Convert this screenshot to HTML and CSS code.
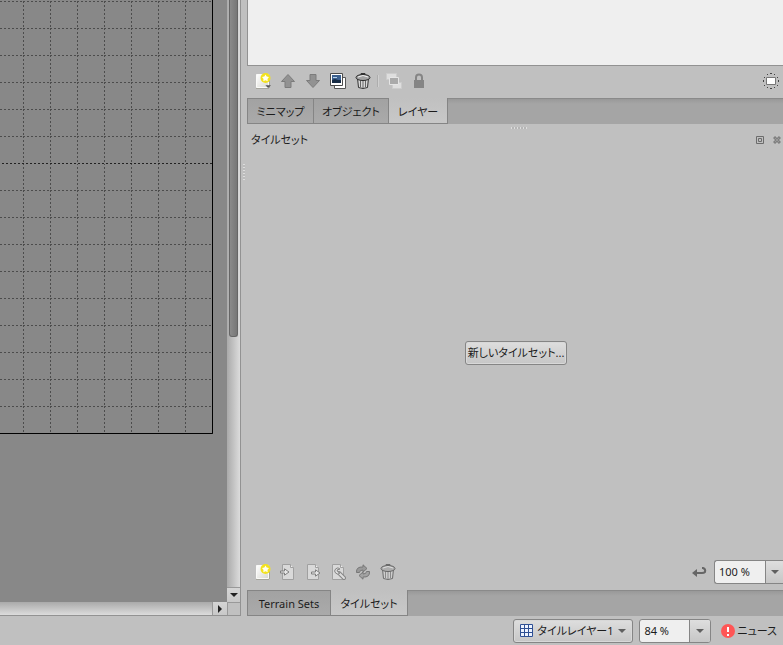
FILE: index.html
```html
<!DOCTYPE html>
<html lang="ja">
<head>
<meta charset="utf-8">
<title>Tiled</title>
<link rel="stylesheet" href="styles.css">
</head>
<body>
<svg class="defs" aria-hidden="true">
  <defs>
    <linearGradient id="paper" x1="0" y1="0" x2="1" y2="1"><stop offset="0" stop-color="#fff"/><stop offset="1" stop-color="#d8d8d2"/></linearGradient>
    <symbol id="new" viewBox="0 0 16 16">
      <path d="M1.5 1.5h12v13h-12z" fill="url(#paper)" stroke="#fafaf8"/>
      <path d="M1 15.5h13M14.5 7v8" stroke="#a5a59d" fill="none"/>
      <circle cx="10.500" cy="5" r="5" fill="#f3e21c"/>
      <path d="M10.500 1.500l1.200 2 2.300.600-1.500 1.800.2 2.300-2.200-.9-2.200.9.2-2.300L7 4.100l2.300-.6z" fill="#fffff0"/>
    </symbol>
    <symbol id="up" viewBox="0 0 16 16"><path d="M8 1.500l6.500 7H11v6H5v-6H1.500z" fill="#929292" stroke="#7c7c7c"/></symbol>
    <symbol id="copy" viewBox="0 0 16 16">
      <path d="M4.500 4.500h11v11h-11z" fill="#fff" stroke="#555"/>
      <path d="M.5.500h12v12H.5z" fill="#fff" stroke="#4c4c4c"/><path d="M2 2h9v8H2z" fill="#3b608f"/>
      <path d="M2 7l3-1 3 1h3v3H2z" fill="#162b45"/><path d="M3 4h4v1H3z" fill="#b8d3eb"/>
    </symbol>
    <symbol id="trash" viewBox="0 0 16 16">
      <path d="M2.500 5h11l-1 9.500q-4.500 2-9 0z" fill="#d8d8d8" stroke="#333"/>
      <path d="M5.500 7v7M8 7v8M10.500 7v7" stroke="#666" fill="none"/>
      <ellipse cx="8" cy="4.500" rx="7" ry="3" fill="#a2a2a2" stroke="#292929"/>
      <path d="M3 4q5-3 10 0" stroke="#f0f0f0" fill="none"/><path d="M6 2V.5h4V2" stroke="#333" fill="none"/>
    </symbol>
    <symbol id="layers" viewBox="0 0 16 16">
      <path d="M.5.500h10v6H.5zM6.500 9.500h9v6h-9z" fill="#dedede" stroke="#ccc"/><path d="M3.500 4.500h9v7h-9z" fill="#aaa" stroke="#e5e5e5"/>
    </symbol>
    <symbol id="lock" viewBox="0 0 16 16"><path d="M5 7V4.500a3 3 0 0 1 6 0V7" fill="none" stroke="#858585" stroke-width="2"/><path d="M3 7h10v8H3z" fill="#858585"/></symbol>
    <symbol id="page" viewBox="0 0 16 16"><path d="M2.500.5h8l3 3v12h-11z" fill="#d9d9d9" stroke="#a0a0a0"/><path d="M10.500.5v3h3" fill="#eee" stroke="#a0a0a0"/></symbol>
    <symbol id="arrow" viewBox="0 0 10 8"><path d="M.5 3h4V.8L9 4 4.500 7.200V5h-4z" fill="#e8e8e8" stroke="#808080"/></symbol>
  </defs>
</svg>
<main class="workspace">
  <section class="map-view" aria-label="マップ">
    <div class="canvas">
      <svg class="grid" width="213" height="434">
        <defs>
          <pattern id="cells" x="23" y="1" width="27" height="27" patternUnits="userSpaceOnUse">
            <path d="M0 .5h27M.5 0v27" stroke="#4c4c4c" stroke-dasharray="2 2" fill="none"/>
          </pattern>
        </defs>
        <rect width="213" height="434" fill="url(#cells)"/>
        <path d="M0 163.500h212" stroke="#888"/>
        <path d="M2 163.500h210" stroke="#222" stroke-dasharray="2 2"/>
        <path d="M212.500 0v433.500H0" stroke="#000" fill="none"/>
      </svg>
    </div>
    <div class="vscroll"><div class="thumb"></div><button class="step" aria-label="下へ"><i class="caret dark"></i></button></div>
    <div class="hscroll"><button class="step" aria-label="右へ"><i class="caret right"></i></button></div>
    <div class="corner"></div>
  </section>
  <div class="splitter"><i></i></div>
  <aside class="docks">
    <div class="layer-list"></div>
    <div class="toolbar">
      <button aria-label="新規レイヤー"><svg viewBox="0 0 17 17"><use href="#new"/><path d="M11 13h6l-3 3z" fill="#555"/></svg></button>
      <button aria-label="上へ"><svg><use href="#up"/></svg></button>
      <button aria-label="下へ"><svg class="flip"><use href="#up"/></svg></button>
      <button aria-label="複製"><svg><use href="#copy"/></svg></button>
      <button aria-label="削除"><svg><use href="#trash"/></svg></button>
      <span class="separator"></span>
      <button aria-label="他を隠す"><svg><use href="#layers"/></svg></button>
      <button aria-label="ロック"><svg><use href="#lock"/></svg></button>
      <span class="spacer"></span>
      <button aria-label="強調表示"><svg viewBox="0 0 16 16"><path d="M3.500 4.500h9v7h-9z" fill="#fff" stroke="#777"/><path d="M7 .5h2M4 1.500h1M11 1.500h1M1 4.500h1M14 4.500h1M0 7.500h1M0 8.500h1M15 7.500h1M15 8.500h1M1 12.500h1M14 12.500h1M4 14.500h1M11 14.500h1M7 15.500h2" stroke="#444"/></svg></button>
    </div>
    <nav class="tabs"><button class="mini">ミニマップ</button><button class="objects">オブジェクト</button><button class="layer active">レイヤー</button></nav>
    <div class="handle"></div>
    <header class="dock-title"><h2>タイルセット</h2>
      <button aria-label="フロート"><svg viewBox="0 0 8 8"><path d="M.5.500h7v7h-7zM2.500 2.500h3v3h-3z" fill="none" stroke="#6c6c6c"/></svg></button>
      <button aria-label="閉じる"><svg viewBox="0 0 8 8"><path d="M1 1l6 6M7 1L1 7" stroke="#808080" stroke-width="3"/><path d="M2 2l4 4M6 2L2 6" stroke="#999"/></svg></button>
    </header>
    <div class="tileset"><button class="push">新しいタイルセット...</button></div>
    <div class="toolbar lower">
      <button aria-label="新しいタイルセット"><svg><use href="#new"/></svg></button>
      <button aria-label="埋め込み"><svg><use href="#page"/><use href="#arrow" x="0" y="4" width="10" height="8"/></svg></button>
      <button aria-label="エクスポート"><svg><use href="#page"/><use href="#arrow" x="6" y="5" width="10" height="8"/></svg></button>
      <button aria-label="編集"><svg><use href="#page"/><path d="M9 9l5 5" stroke="#858585" stroke-width="4" stroke-linecap="round"/><path d="M9 9l5 5" stroke="#ddd" stroke-width="2" stroke-linecap="round"/><path d="M10 5a3 3 0 1 0 0 4L8 8l-1-2z" fill="#ddd" stroke="#858585"/></svg></button>
      <button aria-label="置換"><svg><path d="M1.500 8.500Q1 2.500 8 3V.8L12 4.500 8 8V6Q4.500 6 4.500 8.500z" fill="#999" stroke="#777"/><path d="M14.500 7.500q.5 6-6.500 5.500v2.200L4 11.500 8 8v2q3.500 0 3.500-2.500z" fill="#a2a2a2" stroke="#777"/></svg></button>
      <button aria-label="削除" class="faded"><svg><use href="#trash"/></svg></button>
      <span class="spacer"></span>
      <button aria-label="折り返し"><svg viewBox="0 0 16 16"><path d="M11 4h1q3 1 2 4-1 1-3 1H4" stroke="#666" stroke-width="2" fill="none"/><path d="M1 9l5-4v8z" fill="#666"/></svg></button>
      <div class="combo clipped"><input value="100 %" aria-label="タイルセットの倍率"><button aria-label="倍率を選ぶ"><i class="caret"></i></button></div>
    </div>
    <nav class="tabs"><button class="terrain">Terrain Sets</button><button class="sets active">タイルセット</button></nav>
  </aside>
</main>
<footer class="status">
  <button class="push current"><svg width="13" height="13"><path d="M0 0h13v13H0z" fill="#edf3ff"/><path d="M.5.500h12v12H.5zM4.500 0v13M8.500 0v13M0 4.500h13M0 8.500h13" fill="none" stroke="#2e4f94"/></svg><span>タイルレイヤー1</span><i class="caret"></i></button>
  <div class="combo"><input value="84 %" aria-label="マップの倍率"><button aria-label="倍率を選ぶ"><i class="caret"></i></button></div>
  <button class="news"><svg width="14" height="14"><circle cx="7" cy="7" r="7" fill="#ff5656"/><path d="M7 3v5M7 10v2" stroke="#fff" stroke-width="2"/></svg>ニュース</button>
</footer>
</body>
</html>
```
FILE: styles.css
```css
* { box-sizing: border-box; }
body {
  margin: 0;
  height: 100vh;
  display: flex;
  flex-direction: column;
  overflow: hidden;
  background: #c0c0c0;
  color: #1c1c1c;
  font: 11px/16px "Noto Sans", "Noto Sans CJK JP", sans-serif;
  font-feature-settings: "palt";
}
button, input { font: inherit; color: inherit; font-feature-settings: inherit; }
button { margin: 0; padding: 0; border: 0; background: none; white-space: nowrap; }
svg { display: block; flex: none; }
.defs { position: absolute; width: 0; height: 0; }
.workspace { flex: 1; min-height: 0; display: flex; }

.map-view {
  flex: 1;
  min-width: 0;
  display: grid;
  grid-template: 1fr 13px / 1fr 13px;
  border-right: 1px solid #929292;
  border-bottom: 1px solid #929292;
}
.canvas { background: #888; overflow: hidden; }
.vscroll {
  display: flex;
  flex-direction: column;
  justify-content: space-between;
  background: linear-gradient(90deg, #aaa, #dcdcdc);
}
.thumb {
  height: 56%;
  margin: 0 2px;
  border: 1px solid #666;
  border-top: 0;
  border-radius: 0 0 3px 3px;
  background: linear-gradient(90deg, #8b8b8b, #777);
}
.step {
  height: 15px;
  width: 13px;
  display: grid;
  place-items: center;
  border-top: 1px solid #999;
  background: linear-gradient(#d5d5d5, #c8c8c8);
}
.hscroll { display: flex; justify-content: flex-end; background: linear-gradient(#aaa, #dcdcdc); }
.hscroll .step { width: 15px; height: 13px; border-top: 0; border-left: 1px solid #999; }
.corner { border: 1px solid #999; border-width: 1px 0 0 1px; }
.caret { border: 4px solid transparent; border-top: 4px solid #606060; border-bottom: 0; }
.caret.dark { border-top-color: #222; }
.caret.right { border: 4px solid transparent; border-left: 4px solid #222; border-right: 0; }

.splitter { flex: 0 0 6px; padding: 164px 2px 0; }
.splitter i { display: block; height: 16px; background: repeating-linear-gradient(#ddd 0 1px, #bbb 1px 3px); }
.docks { flex: 0 0 536px; display: flex; flex-direction: column; }
.layer-list { height: 66px; background: #efefef; border: 1px solid #929292; border-width: 0 0 1px 1px; }
.toolbar { display: flex; align-items: center; height: 32px; padding: 0 0 2px 3px; }
.toolbar.lower { height: 34px; }
.toolbar > button { width: 25px; height: 25px; display: grid; place-items: center; }
.toolbar > button svg { width: 16px; height: 16px; }
.toolbar use:not([width]) { width: 16px; height: 16px; }
.flip { transform: scaleY(-1); }
.separator { width: 2px; height: 12px; margin: 0 2px; border-left: 1px solid #adadad; border-right: 1px solid #d0d0d0; }
.spacer { flex: 1; }
.faded { opacity: .6; }

.tabs {
  display: flex;
  height: 26px;
  background: linear-gradient(#999, #a5a5a5 5px);
  border-top: 1px solid #8a8a8a;
}
.tabs button {
  margin-top: -1px;
  padding-top: 2px;
  border: 1px solid #858585;
  border-right-width: 0;
  background: linear-gradient(#a2a2a2, #aaa);
}
.tabs .active { border-width: 0 1px 1px; background: linear-gradient(#c0c0c0, #c8c8c8); }
.mini { width: 66px; }
.objects { width: 75px; }
.layer { width: 60px; }
.terrain { width: 83px; }
.sets { width: 78px; }
.handle {
  align-self: center;
  width: 18px;
  height: 6px;
  margin-left: 8px;
  border: 1px solid #c0c0c0;
  border-top-width: 3px;
  background: repeating-linear-gradient(90deg, #ddd 0 1px, #b5b5b5 1px 3px);
}
.dock-title { display: flex; align-items: center; height: 20px; padding: 0 2px 0 4px; gap: 9px; }
.dock-title h2 { flex: 1; margin: 0; font-size: 11px; font-weight: 400; }
.dock-title svg { width: 8px; height: 8px; }
.tileset { flex: 1; display: grid; place-items: center; padding-left: 2px; }
.push {
  height: 24px;
  padding: 0 2px;
  border: 1px solid #858585;
  border-radius: 3px;
  background: linear-gradient(#dedede, #c6c6c6);
  box-shadow: inset 0 0 0 1px #d8d8d8;
}
.tileset .push { min-width: 101px; }
.combo {
  display: flex;
  width: 72px;
  height: 24px;
  border: 1px solid #858585;
  border-radius: 3px;
  overflow: hidden;
  background: #efefef;
}
.combo input { flex: 1; min-width: 0; padding: 0 0 0 4px; border: 0; outline: 0; background: none; }
.combo button {
  width: 21px;
  display: grid;
  place-items: center;
  border-left: 1px solid #858585;
  background: linear-gradient(#dedede, #c6c6c6);
}
.combo.clipped { width: 69px; margin-left: 3px; border-right: 0; border-radius: 3px 0 0 3px; }
.combo.clipped button { width: 18px; }
.status { height: 29px; display: flex; align-items: center; justify-content: flex-end; gap: 6px; padding-right: 6px; }
.current { width: 120px; display: flex; align-items: center; gap: 4px; padding: 0 6px; }
.current span { flex: 1; text-align: left; }
.news { display: flex; align-items: center; gap: 2px; margin-left: 4px; }
```
